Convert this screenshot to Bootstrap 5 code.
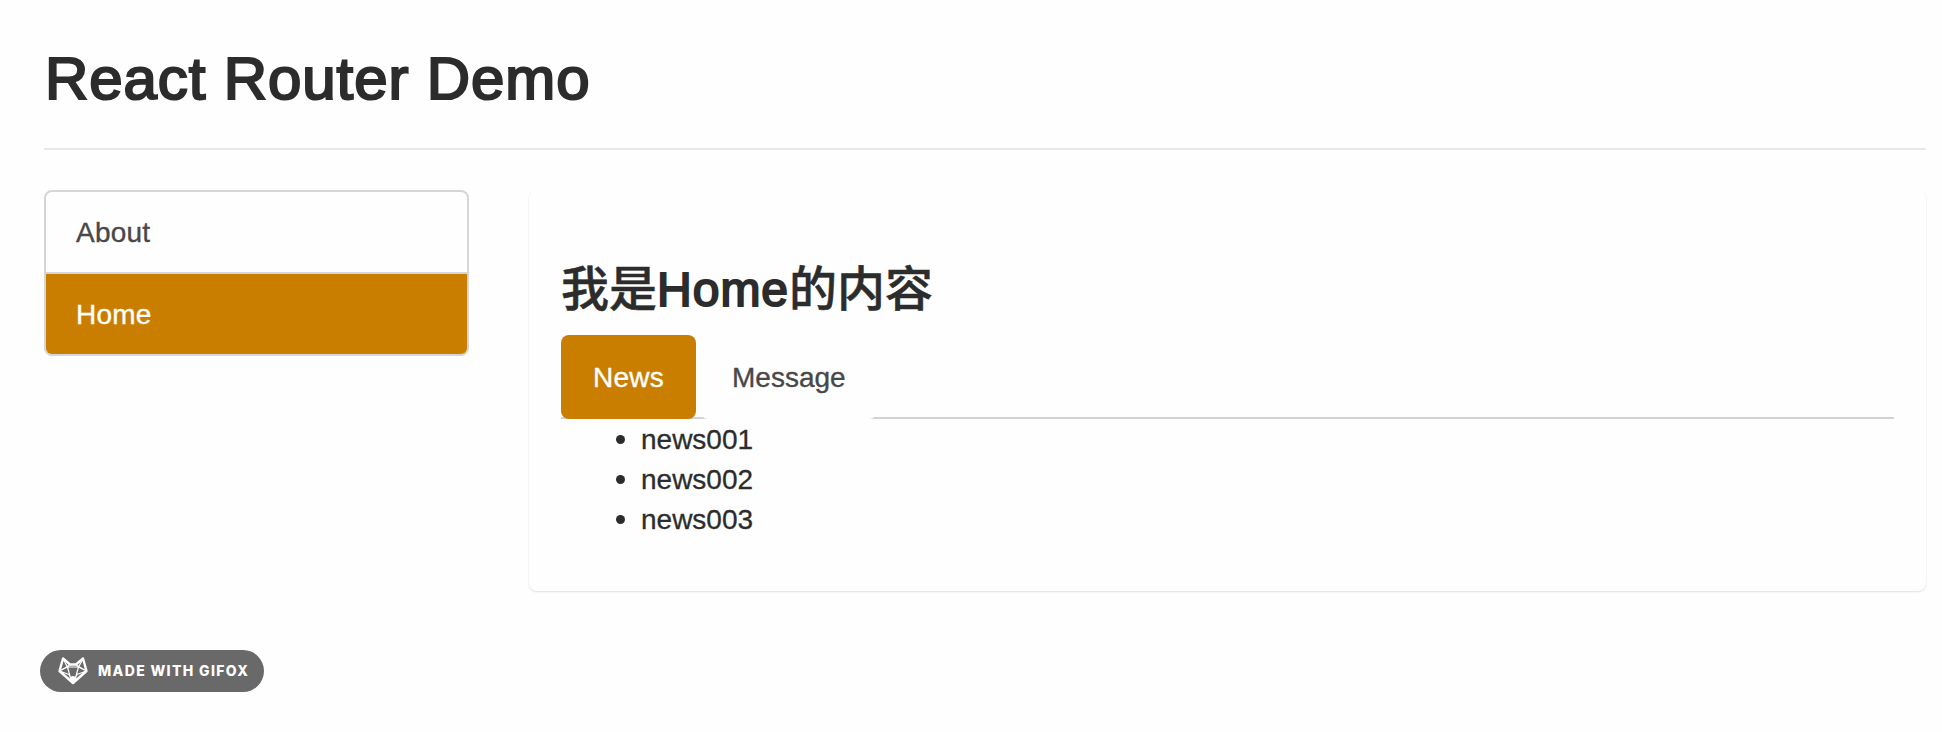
<!DOCTYPE html>
<html lang="zh">
<head>
<meta charset="utf-8">
<title>React Router Demo</title>
<link href="https://cdn.jsdelivr.net/npm/bootstrap@5.3.0/dist/css/bootstrap.min.css" rel="stylesheet">
<style>
body{background:#fefefe;color:#2c2c2c;font:28px/40px "Liberation Sans","Noto Sans CJK SC",sans-serif;height:732px;overflow:hidden}
.page{padding:40px 16px 0 44px}
.page-title{height:110px;border-bottom:2px solid #e8e8e8;margin-bottom:40px}
.page-title h1{font-size:60px;line-height:66px;padding:6px 0 0 1px;margin:0;font-weight:400;-webkit-text-stroke:2.2px #2c2c2c;letter-spacing:.9px}
.side{width:425px;--bs-list-group-border-width:2px;--bs-list-group-border-color:#d6d6d8;--bs-list-group-border-radius:8px;--bs-list-group-bg:#fefefe}
.side .list-group-item{height:84px;padding:21px 30px 19px;color:#484848;line-height:40px;-webkit-text-stroke:.35px currentColor;letter-spacing:.2px}
.side .list-group-item+.list-group-item{height:82px}
.side .list-group-item.active{background:#c97e00;color:#fff;border-color:#d6d6d8;margin-top:0;border-top-width:0}
.panel{margin-left:60px;height:401px;padding:74px 32px 0 32px;border-radius:8px;box-shadow:0 1px 2px rgba(0,0,0,.13)}
.panel h2{font-size:48px;line-height:52px;font-weight:500;margin:0 0 19px;-webkit-text-stroke:.5px #2c2c2c;white-space:nowrap}
.panel h2 span{font-weight:400;-webkit-text-stroke-width:2px;letter-spacing:1px}
.tabs{height:84px;border-bottom:2px solid #d2d2d4}
.tabs .nav-link{height:84px;padding:23px 31px 21px 32px;border-radius:8px;color:#484848;background:#fefefe;line-height:40px;margin-right:4px;-webkit-text-stroke:.35px currentColor}
.tabs .nav-link.active{background:#c97e00;color:#fff;letter-spacing:.25px;padding-right:32px}
.news{padding:1px 0 0 80px;margin:0;list-style:none;-webkit-text-stroke:.3px currentColor}
.news li::before{content:"";display:inline-block;width:9px;height:9px;border-radius:50%;background:#2c2c2c;margin:0 16px 0 -25px;vertical-align:5px}
.made{position:absolute;left:40px;top:650px;width:224px;height:42px;background:#696969;color:#fff;font:800 14px/42px Inter,sans-serif;letter-spacing:1.35px;padding-left:18px;white-space:nowrap}
.made svg{margin-right:10px}
</style>
</head>
<body>
<main class="page">
<header class="page-title"><h1>React Router Demo</h1></header>
<div class="d-flex align-items-start">
<div class="list-group side flex-shrink-0">
<a class="list-group-item">About</a>
<a class="list-group-item active">Home</a>
</div>
<section class="panel flex-grow-1">
<h2>我是<span>Home</span>的内容</h2>
<ul class="nav tabs">
<li class="nav-item"><a class="nav-link active">News</a></li>
<li class="nav-item"><a class="nav-link">Message</a></li>
</ul>
<ul class="news"><li>news001</li><li>news002</li><li>news003</li></ul>
</section>
</div>
</main>
<div class="made rounded-pill d-flex align-items-center">
<svg width="30" height="28" viewBox="0 0 30 28" fill="none" stroke="#fff" stroke-linejoin="round" class="flex-shrink-0">
<path d="M5 1.500L1.500 14L15 26L28.500 14L25 1.500L18 7.500H12Z" stroke-width="2.4"/>
<path d="M5 2L9.500 10L1.500 14L11 17.500L15 25L19 17.500L28.500 14L20.500 10L25 2M12 8L1.500 14M18 8L28.500 14M9.500 10H20.500M9.500 10L12 19M20.500 10L18 19" stroke-width="1.2"/>
<path d="M11.500 20L15 19L18.500 20L17 25L15 27L13 25Z" fill="#fff" stroke="none"/>
</svg><span>MADE WITH GIFOX</span>
</div>
<script src="https://cdn.jsdelivr.net/npm/bootstrap@5.3.0/dist/js/bootstrap.bundle.min.js"></script>
</body>
</html>
